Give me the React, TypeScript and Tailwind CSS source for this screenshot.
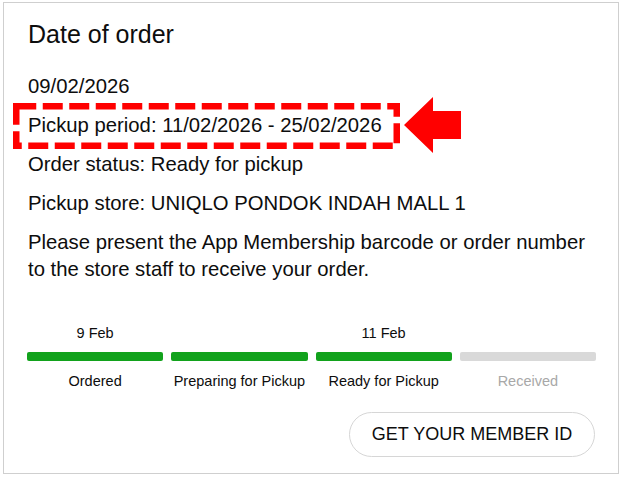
import React from 'react';

const steps = [
    { date: '9 Feb', label: 'Ordered', done: true },
    { date: '', label: 'Preparing for Pickup', done: true },
    { date: '11 Feb', label: 'Ready for Pickup', done: true },
    { date: '', label: 'Received', done: false },
];

export default function App() {
    return (
        <div className="relative w-[622px] h-[478px] bg-white font-['Liberation_Sans',Arial,sans-serif] text-[#0d0d0d]">
            <div className="pt-[2px] pl-[3px]">
                {/* Card */}
                <div className="w-[616px] h-[472px] border border-[#cfcfcf] bg-white pt-4 pl-[23px] pr-[22px] flex flex-col">
                    <h1 className="pl-px text-[25px] leading-[30px]">Date of order</h1>

                    <div className="mt-6 pl-px flex flex-col gap-3 text-[20.3px] leading-[27px]">
                        <p>09/02/2026</p>
                        <p>Pickup period: 11/02/2026 - 25/02/2026</p>
                        <p>Order status: Ready for pickup</p>
                        <p>Pickup store: UNIQLO PONDOK INDAH MALL 1</p>
                        <p>
                            Please present the App Membership barcode or order number
                            <br />
                            to the store staff to receive your order.
                        </p>
                    </div>

                    {/* Progress */}
                    <div className="mt-10 grid grid-cols-4 gap-x-2 text-[14.5px] leading-5">
                        {steps.map((s) => (
                            <div key={s.label} className="flex flex-col items-center">
                                <div className="h-5">{s.date}</div>
                                <div
                                    className={`mt-[9px] h-[9px] w-full rounded-[2px] ${
                                        s.done ? 'bg-[#12a21c]' : 'bg-[#d9d9d9]'
                                    }`}
                                />
                                <div className={`mt-[10px] ${s.done ? '' : 'text-[#a8a8a8]'}`}>{s.label}</div>
                            </div>
                        ))}
                    </div>

                    <button className="mt-[21px] mr-px self-end w-[246px] h-[45px] rounded-full border border-[#d6d6d6] bg-white text-[18px] text-[#0d0d0d]">
                        GET YOUR MEMBER ID
                    </button>
                </div>
            </div>

            {/* Annotation overlay */}
            <svg
                className="absolute left-0 top-0 pointer-events-none"
                width="622"
                height="478"
                viewBox="0 0 622 478"
            >
                <rect
                    x="16.25"
                    y="106.25"
                    width="380.5"
                    height="39.5"
                    fill="none"
                    stroke="#ff0000"
                    strokeWidth="6.5"
                    strokeDasharray="20 6.5"
                />
                <polygon
                    points="404,125 433,97 433,111 461,111 461,139 433,139 433,153"
                    fill="#ff0000"
                />
            </svg>
        </div>
    );
}
